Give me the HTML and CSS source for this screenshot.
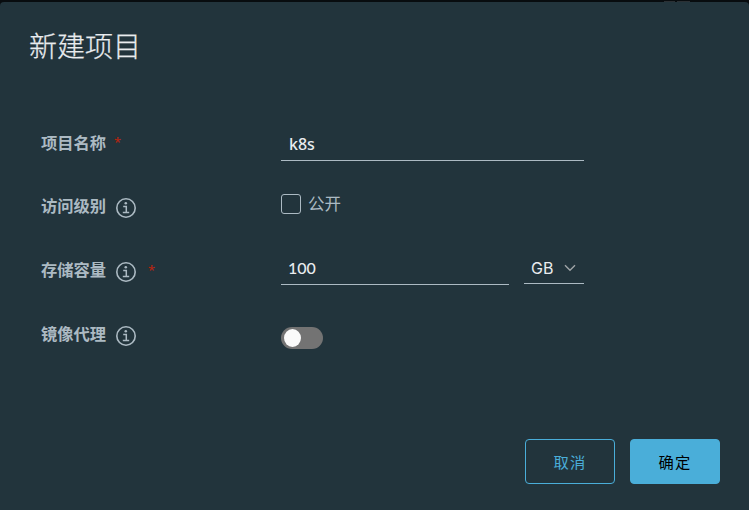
FILE: index.html
```html
<!DOCTYPE html>
<html lang="zh-CN">
<head>
<meta charset="utf-8">
<title>新建项目</title>
<link rel="stylesheet" href="styles.css">
</head>
<body>
<svg width="0" height="0" class="sprite">
  <symbol id="info" viewBox="0 0 20 20">
    <circle cx="10" cy="10" r="9.2" fill="none" stroke="currentColor" stroke-width="1.6"/>
    <path d="M7.2 8.5H10.3V14.5M6.8 14.5H13.2" fill="none" stroke="currentColor" stroke-width="1.5"/>
    <circle cx="9.8" cy="5.2" r="1.3" fill="currentColor"/>
  </symbol>
</svg>
<div class="backdrop"><i class="trace"></i><i class="trace wide"></i></div>
<main class="modal">
  <h1 class="title">新建项目</h1>
  <form class="form">
    <div class="row name-row">
      <div class="label"><span>项目名称</span><b class="required">*</b></div>
      <div class="field input">k8s</div>
    </div>
    <div class="row">
      <div class="label"><span>访问级别</span><svg class="info"><use href="#info"/></svg></div>
      <label class="check"><i class="box"></i><span>公开</span></label>
    </div>
    <div class="row">
      <div class="label"><span>存储容量</span><svg class="info"><use href="#info"/></svg><b class="required">*</b></div>
      <div class="quota">
        <div class="input amount">100</div>
        <div class="select"><span>GB</span><svg class="caret" viewBox="0 0 12 8"><path d="M1 1.2L6 6.2L11 1.2" fill="none" stroke="#a0a5a8" stroke-width="1.4"/></svg></div>
      </div>
    </div>
    <div class="row">
      <div class="label"><span>镜像代理</span><svg class="info"><use href="#info"/></svg></div>
      <div class="toggle"><i class="knob"></i></div>
    </div>
  </form>
  <footer class="actions">
    <div class="btn outline">取消</div>
    <div class="btn primary">确定</div>
  </footer>
</main>
</body>
</html>
```
FILE: styles.css
```css
* { box-sizing: border-box; }
body {
  margin: 0;
  width: 749px;
  height: 510px;
  overflow: hidden;
  background: #080c0f;
  color: #acbac3;
  font-family: "Liberation Sans", "Noto Sans CJK SC", sans-serif;
}
.sprite { display: block; }
.backdrop { height: 2px; display: flex; gap: 2px; padding: 1px 0 0 664px; }
.trace { width: 11px; height: 1px; background: #2b3034; }
.wide { width: 13px; }
.modal {
  height: 508px;
  background: #22343c;
  border-radius: 4px 4px 0 0;
  padding: 23px 29px 26px 29px;
  display: flex;
  flex-direction: column;
}
.title {
  margin: 0;
  height: 40px;
  line-height: 40px;
  font-family: "Noto Sans CJK SC", sans-serif;
  font-size: 28px;
  font-weight: 300;
  color: #e9ecef;
  -webkit-text-stroke: 0.25px #e9ecef;
}
.form { margin-top: 46px; padding-left: 12px; }
.row { display: grid; grid-template-columns: 240px 303px; height: 64px; align-items: start; }
.label { display: flex; height: 62px; align-items: center; font-size: 16px; }
.label span {
  width: 66px;
  font-family: "Noto Sans CJK SC", sans-serif;
  font-size: 16.3px;
  font-weight: 700;
  line-height: 24px;
  margin-top: -3px;
}
.name-row .label span { margin-top: -1px; }
.info { width: 20px; height: 20px; margin: 3px 0 0 9px; }
.required { margin: 0 0 0 7px; color: #b32512; font: 500 13px/20px "Noto Sans", sans-serif; }
.info + .required { margin-left: 12px; }
.input {
  height: 50px;
  border-bottom: 1px solid #acbac3;
  padding: 21px 8px 0;
  font: 500 16px/24px "Noto Sans", sans-serif;
  color: #e9ecef;
}
.quota { display: flex; gap: 15px; }
.amount { width: 228px; height: 46px; padding: 17px 7px 0; font-family: Lato, sans-serif; }
.select {
  width: 60px;
  height: 45px;
  border-bottom: 1px solid #acbac3;
  padding: 17px 7px 0;
  display: flex;
  font: 400 16px/24px Inter, sans-serif;
  color: #e9ecef;
}
.select span { width: 33px; }
.caret { width: 12px; height: 8px; margin-top: 8px; flex: none; }
.check {
  display: flex;
  gap: 7px;
  padding-top: 19px;
  font: 400 16.5px/20px "Noto Sans CJK SC", sans-serif;
}
.check span { margin-top: -1px; }
.box { width: 20px; height: 20px; border: 1px solid #acbac3; border-radius: 3px; }
.toggle { width: 42px; height: 22px; margin-top: 24px; border-radius: 11px; background: #737373; padding: 2px 3px; }
.knob { display: block; width: 17px; height: 18px; border-radius: 50%; background: #fafafa; }
.actions { margin-top: auto; display: flex; justify-content: flex-end; gap: 15px; }
.btn {
  width: 90px;
  height: 45px;
  border: 1px solid #4aaed9;
  border-radius: 4px;
  text-align: center;
  font: 400 15.3px/42px "Noto Sans CJK SC", sans-serif;
  letter-spacing: 1.2px;
  color: #4aaed9;
}
.primary { background: #4aaed9; color: #000; }
```
